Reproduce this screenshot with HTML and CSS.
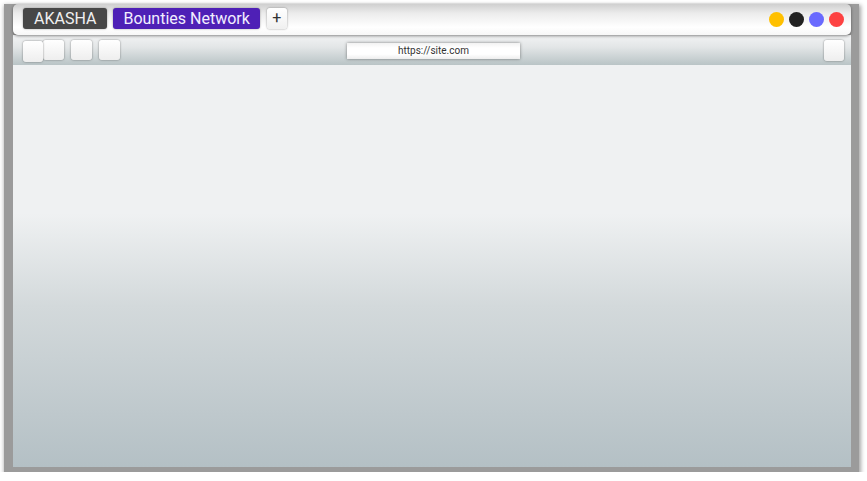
FILE: index.html
```html
<!DOCTYPE html>
<html>
<head>
<meta charset="utf-8">
<link rel="stylesheet" href="styles.css">
</head>
<body>
<div class="window">
  <div class="tabbar">
    <div class="tabs">
      <div class="tab tab-dark">AKASHA</div>
      <div class="tab tab-purple">Bounties Network</div>
      <div class="tab-add">+</div>
    </div>
    <div class="dots">
      <span class="dot dot-yellow"></span>
      <span class="dot dot-black"></span>
      <span class="dot dot-blue"></span>
      <span class="dot dot-red"></span>
    </div>
  </div>
  <div class="toolbar">
    <div class="nav">
      <span class="btn btn-first"></span>
      <span class="btn btn-second"></span>
      <span class="btn btn-third"></span>
      <span class="btn"></span>
    </div>
    <div class="url">https://site.com</div>
    <span class="btn btn-menu"></span>
  </div>
  <div class="content"></div>
</div>
</body>
</html>
```

FILE: styles.css
```css
html, body {
  margin: 0;
  padding: 0;
  background: #fff;
}
body {
  font-family: Roboto, "Liberation Sans", sans-serif;
}
.window {
  box-sizing: border-box;
  width: 855px;
  margin: 4px 0 0 4px;
  padding: 0 8px 5px 9px;
  background: #9b9b9b;
  box-shadow: 1px 2px 4px 1px rgba(0, 0, 0, 0.35);
  display: flex;
  flex-direction: column;
}
.tabbar {
  position: relative;
  z-index: 2;
  height: 31px;
  box-sizing: border-box;
  border-radius: 5px;
  background: linear-gradient(#cfcfcf 0%, #ececec 30%, #ffffff 75%, #f7f7f7 100%);
  box-shadow: 0 1px 3px rgba(0, 0, 0, 0.45);
  display: flex;
  align-items: center;
  justify-content: space-between;
  padding: 0 7px 0 10px;
}
.tabs {
  display: flex;
  align-items: center;
  gap: 6px;
  margin-top: -2px;
}
.tab {
  height: 21px;
  line-height: 21px;
  border-radius: 3px;
  font-size: 16px;
  padding: 0 10px;
  box-shadow: 0 0 2px rgba(0, 0, 0, 0.4);
}
.tab-dark {
  background: #474747;
  color: #f0f0f0;
  padding: 0 11px;
}
.tab-purple {
  background: #4e20b6;
  color: #f2eeff;
}
.tab-add {
  width: 20px;
  height: 21px;
  line-height: 20px;
  text-align: center;
  box-sizing: border-box;
  border-radius: 3px;
  background: linear-gradient(#ffffff, #f0f0f0);
  box-shadow: 0 0 2px rgba(0, 0, 0, 0.45);
  font-size: 16px;
  color: #333;
  margin-left: 1px;
}
.dots {
  display: flex;
  gap: 5px;
  margin-top: -1px;
}
.dot {
  width: 15px;
  height: 15px;
  border-radius: 50%;
  display: block;
}
.dot-yellow { background: #ffc000; }
.dot-black { background: #222222; }
.dot-blue { background: #6a6afe; }
.dot-red { background: #fd4242; }
.toolbar {
  height: 30px;
  box-sizing: border-box;
  background: linear-gradient(#f2f3f4 0%, #e3e6e7 40%, #b9c4c6 100%);
  display: flex;
  align-items: center;
  padding: 0 7px 0 10px;
  position: relative;
}
.nav {
  display: flex;
  align-items: center;
}
.btn {
  display: block;
  width: 21px;
  height: 20px;
  border-radius: 3px;
  background: linear-gradient(#ffffff, #eeeeee);
  box-shadow: 0 0 2px rgba(0, 0, 0, 0.5);
}
.btn-first {
  height: 21px;
  width: 20px;
  position: relative;
  z-index: 1;
  margin-top: 3px;
}
.btn-second {
  margin-right: 7px;
}
.btn-third {
  margin-right: 7px;
}
.url {
  width: 173px;
  height: 16px;
  line-height: 16px;
  margin-left: 227px;
  margin-top: 1px;
  background: linear-gradient(#f2f2f2, #ffffff 30%, #ffffff 70%, #eeeeee);
  box-shadow: 0 0 3px rgba(0, 0, 0, 0.45);
  text-align: center;
  font-size: 10px;
  color: #333;
}
.btn-menu {
  margin-left: auto;
  width: 20px;
  height: 21px;
}
.content {
  height: 402px;
  background: linear-gradient(#eff1f2 0%, #eff1f2 37%, #d3d9db 60%, #b4c0c5 100%);
}
```
